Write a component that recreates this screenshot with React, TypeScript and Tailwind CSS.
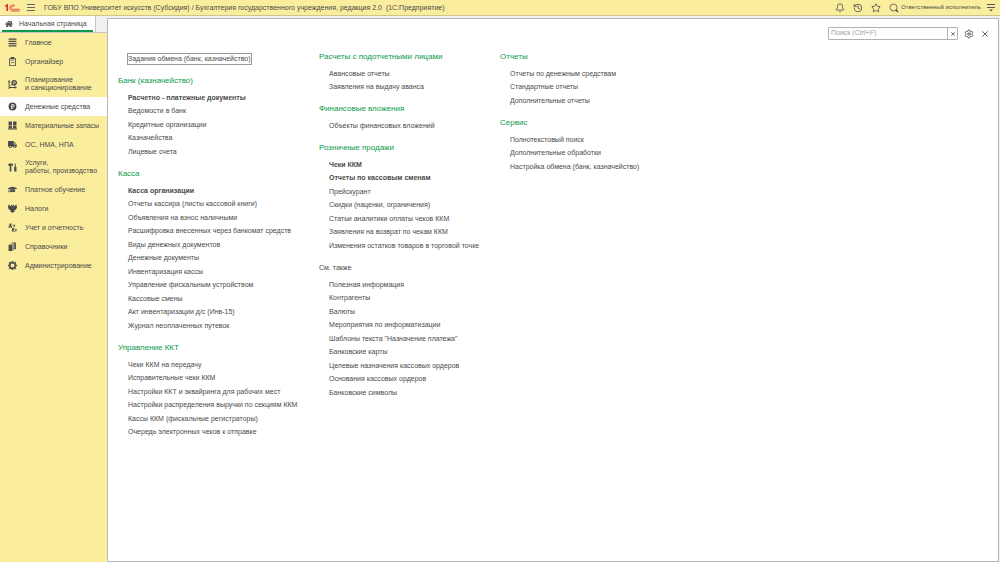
import type { ReactNode } from "react";
import clsx from "clsx";
import { FaTruck, FaGraduationCap, FaHome } from "react-icons/fa";
import { Bell, History, Settings, Star, X } from "lucide-react";

type MenuLink = { label: string; bold?: boolean };
type MenuSection = { title: string; plain?: boolean; items: MenuLink[] };

const list = (...labels: string[]): MenuLink[] => labels.map((label) => ({ label }));

const Glyph = ({ children }: { children: ReactNode }) => (
  <svg viewBox="0 0 16 16" className="size-[9px]" fill="currentColor" aria-hidden="true">
    {children}
  </svg>
);

const icons = {
  main: (
    <Glyph>
      <path d="M1 1h14v2H1zM1 5h14v2H1zM1 9h14v2H1zM1 13h14v2H1z" />
    </Glyph>
  ),
  organizer: (
    <Glyph>
      <path d="M2 2h3V0h6v2h3v14H2zm1.500 2v10.500h9V4zM5 6h6v1.200H5zm0 3h6v1.200H5z" fillRule="evenodd" />
    </Glyph>
  ),
  planning: (
    <Glyph>
      <path d="M2 0l2.500 4h-1.700v8.500H12V11l4 2.300-4 2.200v-1.500H4l-2 2-1.500-1.500.7-1V4H-.5z" />
      <path d="M4 11l4-4" stroke="currentColor" strokeWidth="1.500" />
      <path d="M11 0a5 5 0 1 1 0 10 5 5 0 0 1 0-10zm-1.500 2.500v5h1.200V6h1.300c2.300 0 2.300-3.500 0-3.500zm1.200 1h1.300c.8 0 .8 1.500 0 1.500h-1.300z" fillRule="evenodd" />
    </Glyph>
  ),
  money: (
    <Glyph>
      <path
        d="M8 1a7 7 0 1 1 0 14A7 7 0 0 1 8 1zM6 4v4H5v1h1v1H5v1h1v1.500h1.500V11H10v-1H7.500V9H9c3.500 0 3.500-5 0-5zm1.500 1.300H9c1.500 0 1.500 2.500 0 2.500H7.500z"
        fillRule="evenodd"
      />
    </Glyph>
  ),
  stock: (
    <Glyph>
      <path d="M1 1h6v6H1zM9 1h6v6H9zM1 8h6v5H1zM9 8h6v5H9zM0 13.500h16V15H0z" />
    </Glyph>
  ),
  assets: <FaTruck className="size-[9px]" aria-hidden="true" />,
  services: (
    <Glyph>
      <path d="M0 3l2-2h6l1 2v2H7V4H6v11H3V5H1zM12 1h1.500l.5 6h1v8h-4V7h1z" />
    </Glyph>
  ),
  education: <FaGraduationCap className="size-[9px]" aria-hidden="true" />,
  taxes: (
    <Glyph>
      <path d="M8 3L6.500 1 5 3l1.500 1v1L4 3 1 1 0 6l2 4 3 1-1 3h2l2 2 2-2h2l-1-3 3-1 2-4-1-5-3 2-2.500 2V4L11 3 9.500 1z" />
    </Glyph>
  ),
  accounting: (
    <Glyph>
      <path d="M1 6h1l1-5h3v5h1v3H5.500V7.500h-3V9H1zM8 3h5v1.500h-1.500V8H10V4.500H8zM7 9h1.500v2L10 9h2l-2 3 2 3.500h-2l-1.500-2.500v2.500H7zM12 11h4v1.500h-1.300v3h-1.500v-3H12z" />
    </Glyph>
  ),
  reference: (
    <Glyph>
      <path d="M1 5h7v11H1zM4 3h6v11H9V4H4zM7 1h7v12h-3V2H7z" />
    </Glyph>
  ),
  admin: (
    <Glyph>
      <path
        d="M6.500 0h3v2l1.500.6L12.500 1 15 3.500 13.500 5l.6 1.500H16v3h-2l-.6 1.500 1.600 1.500-2.500 2.500-1.500-1.500-1.500.6V16h-3v-2L5 13.400 3.500 15 1 12.500 2.500 11 2 9.500H0v-3h2L2.600 5 1 3.500 3.500 1 5 2.600 6.500 2zM8 4.500a3.500 3.500 0 1 0 0 7 3.500 3.500 0 0 0 0-7z"
        fillRule="evenodd"
      />
    </Glyph>
  ),
};

const sidebar: { icon: keyof typeof icons; lines: string[]; active?: boolean }[] = [
  { icon: "main", lines: ["Главное"] },
  { icon: "organizer", lines: ["Органайзер"] },
  { icon: "planning", lines: ["Планирование", "и санкционирование"] },
  { icon: "money", lines: ["Денежные средства"], active: true },
  { icon: "stock", lines: ["Материальные запасы"] },
  { icon: "assets", lines: ["ОС, НМА, НПА"] },
  { icon: "services", lines: ["Услуги,", "работы, производство"] },
  { icon: "education", lines: ["Платное обучение"] },
  { icon: "taxes", lines: ["Налоги"] },
  { icon: "accounting", lines: ["Учет и отчетность"] },
  { icon: "reference", lines: ["Справочники"] },
  { icon: "admin", lines: ["Администрирование"] },
];

const bankColumn: MenuSection[] = [
  {
    title: "Банк (казначейство)",
    items: [
      { label: "Расчетно - платежные документы", bold: true },
      ...list("Ведомости в банк", "Кредитные организации", "Казначейства", "Лицевые счета"),
    ],
  },
  {
    title: "Касса",
    items: [
      { label: "Касса организации", bold: true },
      ...list(
        "Отчеты кассира (листы кассовой книги)",
        "Объявления на взнос наличными",
        "Расшифровка внесенных через банкомат средств",
        "Виды денежных документов",
        "Денежные документы",
        "Инвентаризация кассы",
        "Управление фискальным устройством",
        "Кассовые смены",
        "Акт инвентаризации д/с (Инв-15)",
        "Журнал неоплаченных путевок",
      ),
    ],
  },
  {
    title: "Управление ККТ",
    items: list(
      "Чеки ККМ на передачу",
      "Исправительные чеки ККМ",
      "Настройки ККТ и эквайринга для рабочих мест",
      "Настройки распределения выручки по секциям ККМ",
      "Кассы ККМ (фискальные регистраторы)",
      "Очередь электронных чеков к отправке",
    ),
  },
];

const salesColumn: MenuSection[] = [
  {
    title: "Расчеты с подотчетными лицами",
    items: list("Авансовые отчеты", "Заявления на выдачу аванса"),
  },
  { title: "Финансовые вложения", items: list("Объекты финансовых вложений") },
  {
    title: "Розничные продажи",
    items: [
      { label: "Чеки ККМ", bold: true },
      { label: "Отчеты по кассовым сменам", bold: true },
      ...list(
        "Прейскурант",
        "Скидки (наценки, ограничения)",
        "Статьи аналитики оплаты чеков ККМ",
        "Заявления на возврат по чекам ККМ",
        "Изменения остатков товаров в торговой точке",
      ),
    ],
  },
  {
    title: "См. также",
    plain: true,
    items: list(
      "Полезная информация",
      "Контрагенты",
      "Валюты",
      "Мероприятия по информатизации",
      'Шаблоны текста "Назначение платежа"',
      "Банковские карты",
      "Целевые назначения кассовых ордеров",
      "Основания кассовых ордеров",
      "Банковские символы",
    ),
  },
];

const reportsColumn: MenuSection[] = [
  {
    title: "Отчеты",
    items: list("Отчеты по денежным средствам", "Стандартные отчеты", "Дополнительные отчеты"),
  },
  {
    title: "Сервис",
    items: list("Полнотекстовый поиск", "Дополнительные обработки", "Настройка обмена (банк, казначейство)"),
  },
];

const Section = ({ title, plain, items }: MenuSection) => (
  <section>
    <h2 className={clsx("leading-[12px]", plain ? "text-[7px]" : "text-[8px] text-[#0a9a4a]")}>{title}</h2>
    <ul className="mt-[4px] pl-[10px]">
      {items.map(({ label, bold }) => (
        <li key={label} className="flex h-[14px] items-center even:h-[13px]">
          <a href="#" className={clsx("whitespace-nowrap hover:underline", bold && "font-bold")}>
            {label}
          </a>
        </li>
      ))}
    </ul>
  </section>
);

const Column = ({ sections, children }: { sections: MenuSection[]; children?: ReactNode }) => (
  <div className="flex flex-col gap-[9px]">
    {children}
    {sections.map((section) => (
      <Section key={section.title} {...section} />
    ))}
  </div>
);

const TopBar = () => (
  <header className="flex h-[16px] items-center border-b border-[#cfc48a] bg-[#fbed9e] px-[4px]">
    <svg viewBox="0 0 48 27" className="h-[9px] w-[16px]" fill="none" stroke="#e0312f" role="img" aria-label="1C">
      <path d="M2 9l8-7h2v22H7V10l-3 2z" fill="#e0312f" stroke="none" />
      <path d="M33 9a9 9 0 1 0-8 15h22" strokeWidth="2.500" />
      <path d="M29 11a4.500 4.500 0 1 0-4 8h22" strokeWidth="2.500" />
    </svg>
    <button type="button" aria-label="Меню" className="ml-[7px]">
      <svg viewBox="0 0 9 9" className="size-[9px]" stroke="#666" aria-hidden="true">
        <path d="M0 1.500h8M0 4.500h8M0 7.500h8" />
      </svg>
    </button>
    <h1 className="ml-[8px] pt-[2px] text-[7px] whitespace-pre">
      ГОБУ ВПО Университет искусств (Субсидия) / Бухгалтерия государственного учреждения, редакция 2.0{"  "}(1С:Предприятие)
    </h1>
    <div className="ml-auto flex items-center gap-[8px]">
      <button type="button" aria-label="Уведомления">
        <Bell className="size-[10px]" />
      </button>
      <button type="button" aria-label="История">
        <History className="size-[10px]" />
      </button>
      <button type="button" aria-label="Избранное">
        <Star className="size-[10px]" />
      </button>
      <button type="button" aria-label="Поиск">
        <svg viewBox="0 0 20 20" className="size-[10px]" fill="none" stroke="currentColor" strokeWidth="1.500" aria-hidden="true">
          <circle cx="9" cy="9" r="7" />
          <path d="M14 14l4 4" strokeWidth="3" />
        </svg>
      </button>
    </div>
    <a href="#" className="ml-[2px] text-[6px]">
      Ответственный исполнитель
    </a>
    <button type="button" aria-label="Настройки панели" className="ml-[6px]">
      <svg viewBox="0 0 9 9" className="size-[9px]" stroke="#555" aria-hidden="true">
        <path d="M0 1.500h8M0 4.500h8" />
        <path d="M2 6.500h4L4 8.500z" fill="#555" stroke="none" />
      </svg>
    </button>
  </header>
);

const Sidebar = () => (
  <aside className="flex w-[107px] shrink-0 flex-col bg-[#fbed9e]">
    <div className="flex h-[17px] border-b border-[#c4c4c4] bg-[#f0f0f0]">
      <a href="#" className="flex w-[96px] border-r border-[#c4c4c4] bg-white px-[2px]">
        <span className="flex flex-1 flex-col">
          <span className="flex flex-1 items-center gap-[6px] pt-[2px] pl-[3px]">
            <FaHome className="size-[8px]" aria-hidden="true" />
            Начальная страница
          </span>
          <span className="h-[2px] bg-[#0a9a4a]" />
        </span>
      </a>
    </div>
    <nav>
      <ul>
        {sidebar.map(({ icon, lines, active }) => (
          <li key={icon}>
            <a
              href="#"
              className={clsx(
                "flex items-center gap-[8px] pl-[8px] leading-[8px]",
                lines.length > 1 ? "h-[26px]" : "h-[19px]",
                active && "bg-white",
              )}
            >
              {icons[icon]}
              <span>
                {lines.map((line) => (
                  <span key={line} className="block whitespace-nowrap">
                    {line}
                  </span>
                ))}
              </span>
            </a>
          </li>
        ))}
      </ul>
    </nav>
  </aside>
);

export default function App() {
  return (
    <div className="flex min-h-screen flex-col bg-[#f0f0f0] font-['Liberation_Sans',Arial,sans-serif] text-[7px] text-[#4a4a4a]">
      <TopBar />
      <div className="flex flex-1">
        <Sidebar />
        <div className="flex flex-1 pt-[2px] pr-[1px]">
          <main className="flex flex-1 items-start justify-between border border-[#b8b8b8] bg-white">
            <div className="grid grid-cols-[201px_181px_auto] pt-[32px] pl-[10px]">
              <Column sections={bankColumn}>
                <div className="flex h-[15px] items-center pl-[9px]">
                  <a href="#" className="border border-[#999] leading-[10px]">
                    Задания обмена (банк, казначейство)
                  </a>
                </div>
              </Column>
              <Column sections={salesColumn} />
              <Column sections={reportsColumn} />
            </div>
            <div className="flex items-center gap-[6px] pt-[8px] pr-[8px]">
              <form role="search" className="flex h-[13px] w-[130px] rounded-[1px] border border-[#b0b0b0]">
                <input
                  type="text"
                  aria-label="Поиск"
                  placeholder="Поиск (Ctrl+F)"
                  className="min-w-0 flex-1 px-[2px] placeholder:text-[#a0a0a0]"
                />
                <button type="reset" aria-label="Очистить" className="flex w-[10px] items-center justify-center border-l border-[#b0b0b0]">
                  <X className="size-[6px]" strokeWidth={3} />
                </button>
              </form>
              <button type="button" aria-label="Настройка навигации">
                <Settings className="size-[10px]" />
              </button>
              <button type="button" aria-label="Закрыть">
                <X className="size-[10px]" />
              </button>
            </div>
          </main>
        </div>
      </div>
    </div>
  );
}
